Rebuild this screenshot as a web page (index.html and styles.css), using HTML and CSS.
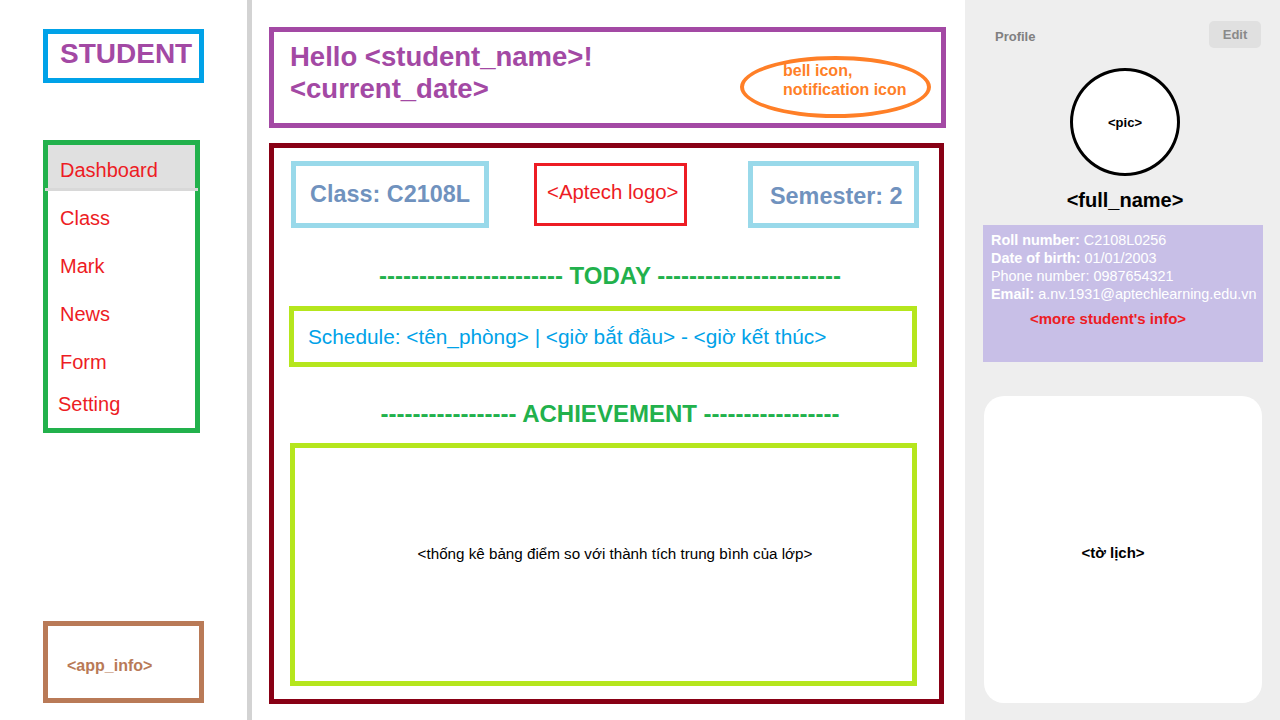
FILE: index.html
```html
<!DOCTYPE html>
<html lang="vi">
<head>
<meta charset="utf-8">
<title>Student Dashboard</title>
<link rel="stylesheet" href="styles.css">
</head>
<body>
<div class="app">
  <aside class="sidebar">
    <div class="brand">STUDENT</div>
    <ul class="nav">
      <li class="nav-item active">Dashboard</li>
      <li class="nav-item">Class</li>
      <li class="nav-item">Mark</li>
      <li class="nav-item">News</li>
      <li class="nav-item">Form</li>
      <li class="nav-item setting">Setting</li>
    </ul>
    <div class="app-info">&lt;app_info&gt;</div>
  </aside>

  <main class="main">
    <header class="greeting">
      <div class="greeting-text">Hello &lt;student_name&gt;!<br>&lt;current_date&gt;</div>
      <div class="bell">bell icon,<br>notification icon</div>
    </header>

    <section class="board">
      <div class="info-row">
        <div class="class-box">Class: C2108L</div>
        <div class="logo-box">&lt;Aptech logo&gt;</div>
        <div class="sem-box">Semester: 2</div>
      </div>
      <h2 class="section-title title-today">----------------------- TODAY -----------------------</h2>
      <div class="schedule">Schedule: &lt;tên_phòng&gt; | &lt;giờ bắt đầu&gt; - &lt;giờ kết thúc&gt;</div>
      <h2 class="section-title title-achievement">----------------- ACHIEVEMENT -----------------</h2>
      <div class="achievement">&lt;thống kê bảng điểm so với thành tích trung bình của lớp&gt;</div>
    </section>
  </main>

  <aside class="profile">
    <div class="profile-head">
      <span class="profile-label">Profile</span>
      <span class="edit-btn">Edit</span>
    </div>
    <div class="avatar">&lt;pic&gt;</div>
    <div class="full-name">&lt;full_name&gt;</div>
    <div class="details">
      <div><b>Roll number:</b> C2108L0256</div>
      <div><b>Date of birth:</b> 01/01/2003</div>
      <div>Phone number: 0987654321</div>
      <div><b>Email:</b> a.nv.1931@aptechlearning.edu.vn</div>
      <div class="more">&lt;more student's info&gt;</div>
    </div>
    <div class="calendar">&lt;tờ lịch&gt;</div>
  </aside>
</div>
</body>
</html>
```
FILE: styles.css
```css
* { box-sizing: border-box; }
html, body { margin: 0; padding: 0; }
body {
  font-family: "Liberation Sans", Arial, sans-serif;
  background: #ffffff;
  width: 1280px;
  height: 720px;
  overflow: hidden;
}
.app {
  display: flex;
  width: 1280px;
  height: 720px;
}

/* ---------- sidebar ---------- */
.sidebar {
  width: 252px;
  flex: 0 0 252px;
  border-right: 5px solid #d3d3d3;
  padding: 29px 0 17px 43px;
  display: flex;
  flex-direction: column;
}
.brand {
  width: 161px;
  height: 54px;
  border: 5px solid #00a2e8;
  padding-left: 12px;
  line-height: 40px;
  font-size: 28px;
  font-weight: bold;
  color: #a349a4;
}
.nav {
  list-style: none;
  margin: 57px 0 0 0;
  padding: 0 0 6px 0;
  width: 157px;
  border: 5px solid #22b14c;
}
.nav-item {
  height: 48px;
  line-height: 48px;
  padding-left: 12px;
  font-size: 20px;
  color: #ed1c24;
}
.nav-item.active {
  position: relative;
  height: 46px;
  line-height: 42px;
  padding-top: 4px;
  margin-bottom: 3px;
  background: #e0e0e0;
}
.nav-item.active::after {
  content: "";
  position: absolute;
  left: -3px;
  right: -3px;
  bottom: 0;
  height: 3px;
  background: #d8d8d8;
}
.nav-item.setting {
  height: 36px;
  line-height: 36px;
  padding-left: 10px;
}
.app-info {
  margin-top: auto;
  width: 161px;
  height: 82px;
  border: 5px solid #b97a57;
  padding: 30px 0 0 19px;
  line-height: 20px;
  font-size: 16px;
  font-weight: bold;
  color: #b97a57;
}

/* ---------- main ---------- */
.main {
  width: 713px;
  flex: 0 0 713px;
  padding: 27px 0 0 17px;
}
.greeting {
  width: 677px;
  height: 101px;
  border: 5px solid #a349a4;
  display: flex;
  justify-content: space-between;
  align-items: flex-start;
}
.greeting-text {
  padding: 9px 0 0 16px;
  font-size: 27.5px;
  line-height: 32px;
  font-weight: bold;
  color: #a349a4;
}
.bell {
  width: 191px;
  height: 62px;
  margin: 24px 10px 0 0;
  border: 4px solid #ff7f27;
  border-radius: 50%;
  padding: 1px 0 0 39px;
  font-size: 16px;
  line-height: 19px;
  font-weight: bold;
  color: #ff7f27;
}
.board {
  margin-top: 15px;
  width: 675px;
  height: 561px;
  border: 5px solid #880015;
  padding: 13px 0 0 15px;
}
.info-row {
  display: flex;
  align-items: center;
  height: 67px;
  padding-left: 2px;
}
.class-box, .sem-box {
  height: 67px;
  border: 5px solid #99d9ea;
  display: flex;
  align-items: center;
  font-size: 23.4px;
  font-weight: bold;
  color: #7092be;
}
.class-box {
  width: 198px;
  justify-content: center;
}
.logo-box {
  margin-left: 45px;
  width: 153px;
  height: 63px;
  border: 3px solid #ed1c24;
  padding-left: 10px;
  line-height: 52px;
  font-size: 20.4px;
  color: #ed1c24;
  white-space: nowrap;
}
.sem-box {
  margin-left: 61px;
  width: 171px;
  padding: 3px 0 0 17px;
}
.section-title {
  margin: 0;
  width: 628px;
  padding-left: 14px;
  text-align: center;
  font-size: 24px;
  line-height: 28px;
  font-weight: bold;
  color: #22b14c;
  white-space: nowrap;
}
.title-today { margin-top: 34px; }
.title-achievement { margin-top: 33px; }
.schedule {
  margin-top: 16px;
  width: 628px;
  height: 61px;
  border: 5px solid #b5e61d;
  padding-left: 14px;
  line-height: 51px;
  font-size: 20.8px;
  color: #00a2e8;
  white-space: nowrap;
}
.achievement {
  margin: 15px 0 0 1px;
  width: 627px;
  height: 243px;
  border: 5px solid #b5e61d;
  display: flex;
  align-items: center;
  justify-content: center;
  padding: 0 0 23px 23px;
  font-size: 15.2px;
  color: #000000;
}

/* ---------- profile ---------- */
.profile {
  flex: 0 0 315px;
  width: 315px;
  min-width: 0;
  background: #eeeeee;
  padding: 21px 17px 17px 18px;
  display: flex;
  flex-direction: column;
}
.profile-head {
  display: flex;
  justify-content: space-between;
  align-items: center;
  height: 27px;
}
.profile-label {
  margin-left: 12px;
  margin-top: 3px;
  font-size: 13px;
  font-weight: bold;
  color: #808080;
}
.edit-btn {
  width: 52px;
  height: 27px;
  margin-right: 2px;
  border-radius: 5px;
  background: #e0e0e0;
  text-align: center;
  line-height: 27px;
  font-size: 13px;
  font-weight: bold;
  color: #8a8a8a;
}
.avatar {
  align-self: center;
  margin: 20px 0 0 4px;
  width: 110px;
  height: 108px;
  border: 3px solid #000000;
  border-radius: 50%;
  background: #ffffff;
  display: flex;
  align-items: center;
  justify-content: center;
  font-size: 13px;
  font-weight: bold;
  color: #000000;
}
.full-name {
  margin-top: 12px;
  padding-left: 4px;
  text-align: center;
  line-height: 24px;
  font-size: 20px;
  font-weight: bold;
  color: #000000;
}
.details {
  margin-top: 13px;
  min-width: 0;
  height: 137px;
  background: #c8bfe7;
  padding: 6px 0 0 8px;
  color: #ffffff;
  font-size: 14.4px;
  line-height: 18px;
  white-space: nowrap;
  overflow: hidden;
}
.details .more {
  margin-top: 7px;
  padding-left: 39px;
  font-size: 15px;
  font-weight: bold;
  color: #ed1c24;
}
.calendar {
  margin: 34px 1px 0 1px;
  height: 307px;
  background: #ffffff;
  border-radius: 20px;
  display: flex;
  align-items: center;
  justify-content: center;
  padding: 5px 20px 0 0;
  font-size: 15px;
  font-weight: bold;
  color: #000000;
}
```
